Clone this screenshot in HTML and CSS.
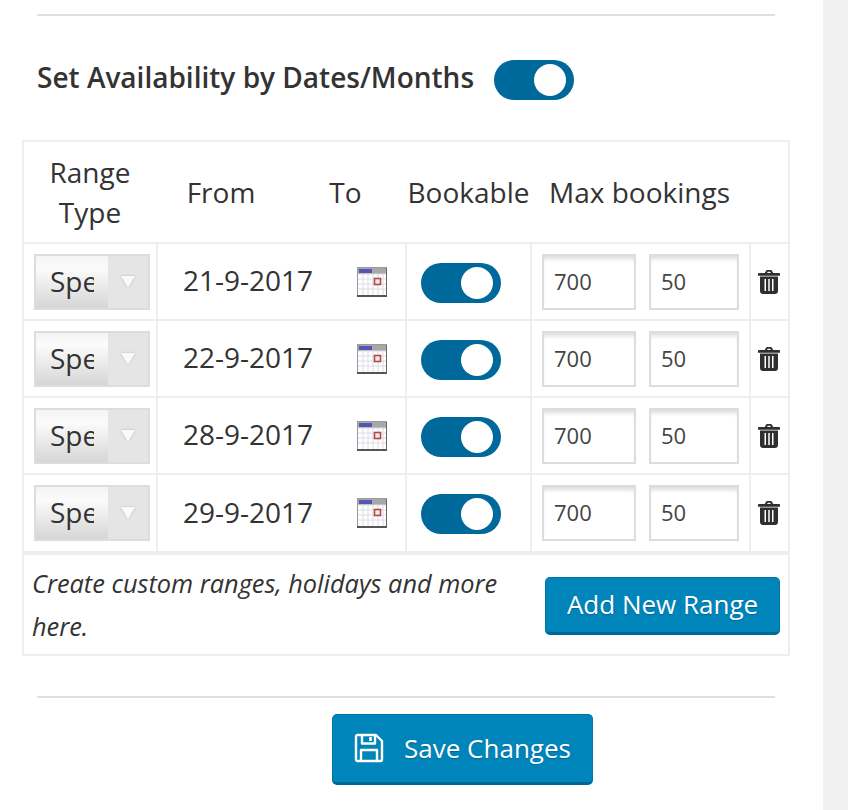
FILE: index.html
```html
<!DOCTYPE html>
<html lang="en">
<head>
<meta charset="utf-8">
<title>Set Availability</title>
<link rel="stylesheet" href="styles.css">
</head>
<body>
<svg class="defs" width="0" height="0" aria-hidden="true">
  <symbol id="cal" viewBox="0 0 30 30">
    <rect x="0.5" y="0.5" width="29" height="28" fill="#fff" stroke="#9a9a9a"/>
    <rect x="1" y="1" width="28" height="6" fill="#a8a8a8"/>
    <rect x="2" y="2" width="13" height="4" fill="#5555b5"/>
    <path d="M1 7H29M1 12H29M1 17H29M1 22H29M6 7V28M11 7V28M16 7V28M21 7V28M26 7V28" stroke="#dcdce4" fill="none"/>
    <rect x="17.5" y="11.5" width="6" height="6" fill="#f4e8e8" stroke="#b04a4a" stroke-width="1.6"/>
    <path d="M0 29H30" stroke="#555" stroke-width="2"/>
    <path d="M29.5 1V29" stroke="#666"/>
  </symbol>
  <symbol id="trash" viewBox="0 0 22 24">
    <path fill="#2f2f2f" fill-rule="evenodd" d="M6.800 3 8 .8C8.200.3 8.700 0 9.200 0h3.600c.5 0 1 .3 1.200.8L15.200 3H21c.6 0 1 .4 1 1v1.800H0V4c0-.6.4-1 1-1h5.800zm2.300 0h3.800l-.6-1.300H9.700L9.100 3zM2 6.500h18V21c0 1.700-1.300 3-3 3H5c-1.700 0-3-1.300-3-3V6.500zM6.500 9v12h1.500V9H6.500zm3.750 0v12h1.500V9h-1.500zM14 9v12h1.500V9H14z"/>
  </symbol>
</svg>
<div class="page">
  <main class="content">
    <hr class="rule rule-top">
    <div class="heading">
      <h2 class="heading-text">Set Availability by Dates/Months</h2>
      <span class="toggle"><span class="knob"></span></span>
    </div>
    <table class="ranges">
      <colgroup>
        <col class="c-type"><col class="c-from"><col class="c-to"><col class="c-book"><col class="c-max"><col class="c-del">
      </colgroup>
      <thead>
        <tr>
          <th>Range<br>Type</th>
          <th>From</th>
          <th>To</th>
          <th>Bookable</th>
          <th class="th-max">Max bookings</th>
          <th></th>
        </tr>
      </thead>
      <tbody>
        <tr>
          <td class="cell"><div class="select"><span class="select-val"><span class="select-text">Spe</span></span><span class="select-arrow"><i class="tri"></i></span></div></td>
          <td class="cell" colspan="2"><div class="date"><span class="date-text">21-9-2017</span><svg class="cal"><use href="#cal"/></svg></div></td>
          <td class="cell"><div class="toggle-wrap"><span class="toggle"><span class="knob"></span></span></div></td>
          <td class="cell"><div class="inputs"><span class="input w1">700</span><span class="input w2">50</span></div></td>
          <td class="cell last"><div class="center"><svg class="trash"><use href="#trash"/></svg></div></td>
        </tr>
        <tr>
          <td class="cell"><div class="select"><span class="select-val"><span class="select-text">Spe</span></span><span class="select-arrow"><i class="tri"></i></span></div></td>
          <td class="cell" colspan="2"><div class="date"><span class="date-text">22-9-2017</span><svg class="cal"><use href="#cal"/></svg></div></td>
          <td class="cell"><div class="toggle-wrap"><span class="toggle"><span class="knob"></span></span></div></td>
          <td class="cell"><div class="inputs"><span class="input w1">700</span><span class="input w2">50</span></div></td>
          <td class="cell last"><div class="center"><svg class="trash"><use href="#trash"/></svg></div></td>
        </tr>
        <tr>
          <td class="cell"><div class="select"><span class="select-val"><span class="select-text">Spe</span></span><span class="select-arrow"><i class="tri"></i></span></div></td>
          <td class="cell" colspan="2"><div class="date"><span class="date-text">28-9-2017</span><svg class="cal"><use href="#cal"/></svg></div></td>
          <td class="cell"><div class="toggle-wrap"><span class="toggle"><span class="knob"></span></span></div></td>
          <td class="cell"><div class="inputs"><span class="input w1">700</span><span class="input w2">50</span></div></td>
          <td class="cell last"><div class="center"><svg class="trash"><use href="#trash"/></svg></div></td>
        </tr>
        <tr>
          <td class="cell"><div class="select"><span class="select-val"><span class="select-text">Spe</span></span><span class="select-arrow"><i class="tri"></i></span></div></td>
          <td class="cell" colspan="2"><div class="date"><span class="date-text">29-9-2017</span><svg class="cal"><use href="#cal"/></svg></div></td>
          <td class="cell"><div class="toggle-wrap"><span class="toggle"><span class="knob"></span></span></div></td>
          <td class="cell"><div class="inputs"><span class="input w1">700</span><span class="input w2">50</span></div></td>
          <td class="cell last"><div class="center"><svg class="trash"><use href="#trash"/></svg></div></td>
        </tr>
      </tbody>
      <tfoot>
        <tr>
          <td class="foot-cell" colspan="6">
            <div class="foot">
              <em class="foot-text">Create custom ranges, holidays and more here.</em>
              <button class="btn btn-add" type="button">Add New Range</button>
            </div>
          </td>
        </tr>
      </tfoot>
    </table>
    <hr class="rule rule-bottom">
    <div class="save-row">
      <button class="btn btn-save" type="button">
        <svg class="save-icon" viewBox="0 0 30 30" fill="none" stroke="#fff" stroke-width="2.400" stroke-linejoin="round"><path d="M2 3.500C2 2.700 2.700 2 3.500 2H22L28 8V26.500C28 27.300 27.300 28 26.500 28H3.500C2.700 28 2 27.300 2 26.500V3.500Z"/><path d="M8 2V10.500H21V2"/><path d="M16.500 4V8" stroke-width="2.600"/><path d="M7 28V17H23V28"/></svg>
        <span>Save Changes</span>
      </button>
    </div>
  </main>
  <aside class="strip"></aside>
</div>
</body>
</html>
```

FILE: styles.css
```css
* { box-sizing: border-box; }
html, body { margin: 0; height: 810px; overflow: hidden; background: #fff; }
body { font-family: "Open Sans", "Noto Sans", sans-serif; color: #333; }
.defs { position: absolute; }
.page { display: flex; height: 810px; }
.content { width: 823px; flex: none; padding-left: 22px; }
.strip { flex: 1; background: #f1f1f1; }

.rule { border: 0; height: 2px; background: #e0e0e0; margin: 0; width: 738px; margin-left: 15px; }
.rule-top { margin-top: 14px; }
.rule-bottom { margin-top: 40px; }

.heading { display: flex; align-items: center; gap: 20px; margin: 44px 0 40px 15px; height: 40px; }
.heading-text { margin: 0; padding-bottom: 6px; font-size: 28px; font-weight: 600; line-height: 40px; color: #333; }

.toggle { display: block; width: 80px; height: 40px; border-radius: 20px; background: #00699b; padding: 4px 8px 4px 40px; }
.knob { display: block; width: 32px; height: 32px; border-radius: 50%; background: #fff; }

.ranges { width: 768px; table-layout: fixed; border-collapse: separate; border-spacing: 0; border: 2px solid #eee; }
.c-type { width: 134px; }
.c-from { width: 128px; }
.c-to { width: 121px; }
.c-book { width: 125px; }
.c-max { width: 219px; }
.c-del { width: 37px; }

th { height: 102px; padding: 0 2px 0 0; font-size: 28px; line-height: 40px; font-weight: 400; text-align: center; color: #333; border-bottom: 2px solid #eee; white-space: nowrap; }
.th-max { text-align: left; padding-left: 17px; }

.cell { height: 77px; padding: 0; border-bottom: 2px solid #eee; border-right: 2px solid #eee; vertical-align: middle; }
.cell.last { border-right: 0; }
tbody tr:last-child .cell { border-bottom-width: 4px; height: 80px; }

.select { display: flex; width: 116px; height: 56px; margin-left: 10px; border: 2px solid #ddd; overflow: hidden; }
.select-val { width: 72px; flex: none; padding-left: 14px; font-size: 28px; line-height: 50px; background: linear-gradient(#f4f4f4, #fbfbfb 25%, #d6d6d6); }
.select-text { display: block; width: 44px; overflow: hidden; }
.select-arrow { flex: 1; display: flex; align-items: center; justify-content: center; background: #e5e5e5; }
.tri { display: block; width: 0; height: 0; border-left: 7px solid transparent; border-right: 7px solid transparent; border-top: 12px solid #fafafa; filter: drop-shadow(0 0 1px #b8b8b8); }

.date { display: flex; align-items: center; justify-content: space-between; padding: 0 18px 0 25px; font-size: 28px; line-height: 38px; }
.date-text { padding-bottom: 3px; }
.cal { width: 30px; height: 30px; display: block; }
.center { display: flex; align-items: center; justify-content: center; padding-right: 2px; }
.toggle-wrap { padding: 2px 0 0 14px; }

.inputs { display: flex; gap: 13px; padding-left: 10px; }
.input { display: block; height: 56px; border: 2px solid #ddd; font-size: 22px; line-height: 50px; padding-left: 10px; box-shadow: inset 0 5px 4px -2px #ddd; color: #444; }
.w1 { width: 94px; }
.w2 { width: 90px; }

.trash { width: 22px; height: 24px; display: block; }

.foot-cell { padding: 0; }
.foot { display: flex; justify-content: space-between; align-items: center; height: 99px; padding: 3px 8px 0 8px; }
.foot-text { width: 480px; margin-top: -2px; font-size: 25.350px; line-height: 43px; color: #333; }

.btn { display: inline-flex; align-items: center; justify-content: center; padding: 0 0 2px; border: 1px solid #0073aa; border-bottom: 3px solid #006799; border-radius: 5px; background: #0085ba; color: #fff; font-family: inherit; text-shadow: 0 1px 1px #006799; }
.btn-add { width: 235px; height: 58px; font-size: 26px; }
.btn-save { width: 261px; height: 71px; font-size: 26px; gap: 20px; }
.save-icon { width: 30px; height: 30px; flex: none; }
.save-row { padding-left: 310px; margin-top: 16px; }
```
